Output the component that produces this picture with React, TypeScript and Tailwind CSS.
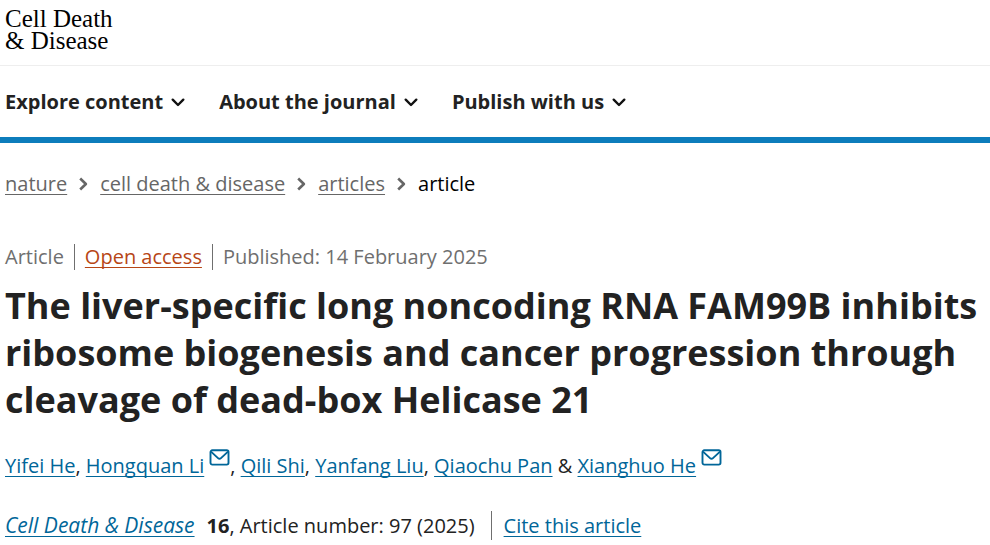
import { Fragment } from "react"

interface Author {
  name: string
  corresponding?: boolean
}

const menus = ["Explore content", "About the journal", "Publish with us"]

const crumbs = ["nature", "cell death & disease", "articles"]

const authors: Author[] = [
  { name: "Yifei He" },
  { name: "Hongquan Li", corresponding: true },
  { name: "Qili Shi" },
  { name: "Yanfang Liu" },
  { name: "Qiaochu Pan" },
  { name: "Xianghuo He", corresponding: true },
]

const linkClass = "underline decoration-1 underline-offset-3 [text-decoration-skip-ink:none]"

function ChevronDown() {
  return (
    <svg width="14" height="9" viewBox="0 0 14 9" fill="none" stroke="#111" strokeWidth="2.4" strokeLinecap="round" strokeLinejoin="round" aria-hidden="true">
      <path d="M1.7 1.7 7 7l5.3-5.3" />
    </svg>
  )
}

function ChevronRight() {
  return (
    <svg width="9" height="14" viewBox="0 0 9 14" fill="none" stroke="#666" strokeWidth="2.6" strokeLinejoin="round" aria-hidden="true">
      <path d="M1.2 1.5 6.9 7l-5.7 5.5" />
    </svg>
  )
}

function MailIcon() {
  return (
    <svg className="inline-block align-[7px] ml-[5px]" width="21" height="17" viewBox="0 0 21 17" fill="none" stroke="#069" strokeWidth="1.9" strokeLinejoin="round" aria-hidden="true">
      <rect x="1.5" y="1.3" width="18" height="14.3" rx="1.8" />
      <path d="m2 2.6 7 6.5c1 .9 2 .9 3 0l7-6.5" />
    </svg>
  )
}

export default function App() {
  return (
    <div className="bg-white text-[#222] text-[20px] leading-7 font-['Open_Sans','Noto_Sans',sans-serif]">
      <header className="border-b-6 border-[#0d7dbc]">
        <div className="px-[5px] pt-2 pb-[13px] border-b border-[#eee]">
          <a href="#" className="inline-block align-top text-[25px] leading-[22px] text-black font-['Liberation_Serif',serif]">
            Cell Death
            <br />
            &amp; Disease
          </a>
        </div>
        <nav className="flex items-center gap-[34px] px-[5px] pt-[22px] pb-[21px]">
          {menus.map((menu) => (
            <button key={menu} type="button" className="flex items-center gap-2 font-bold">
              {menu}
              <ChevronDown />
            </button>
          ))}
        </nav>
      </header>

      <nav aria-label="Breadcrumb" className="px-[5px] pt-[27px]">
        <ol className="flex items-center gap-3">
          {crumbs.map((crumb) => (
            <li key={crumb} className="flex items-center gap-3">
              <a href="#" className={`text-[#666] ${linkClass}`}>{crumb}</a>
              <ChevronRight />
            </li>
          ))}
          <li className="text-black">article</li>
        </ol>
      </nav>

      <main className="px-[5px] pt-[46px]">
        <ul className="flex items-center leading-[26px] text-[#6f6f6f]">
          <li className="pr-[10px] border-r border-[#6f6f6f]">Article</li>
          <li className="px-[10px] border-r border-[#6f6f6f]">
            <a href="#" className={`text-[#b74616] ${linkClass}`}>Open access</a>
          </li>
          <li className="pl-[10px]">
            Published: <time dateTime="2025-02-14">14 February 2025</time>
          </li>
        </ul>

        <h1 className="mt-3 text-[36px] leading-[47px] font-bold">
          The liver-specific long noncoding RNA FAM99B inhibits ribosome biogenesis and cancer progression through
          cleavage of dead-box Helicase 21
        </h1>

        <p className="mt-[26px]">
          {authors.map((author, i) => (
            <Fragment key={author.name}>
              {i > 0 && (i === authors.length - 1 ? " & " : ", ")}
              <a href="#" className={`text-[#069] ${linkClass}`}>{author.name}</a>
              {author.corresponding && <MailIcon />}
            </Fragment>
          ))}
        </p>

        <div className="mt-[31px] flex items-center">
          <p className="pr-4 border-r border-[#6f6f6f]">
            <a href="#" className={`mr-3 text-[21px] italic text-[#069] ${linkClass}`}>Cell Death &amp; Disease</a>
            <b>16</b>, Article number: 97 (2025)
          </p>
          <a href="#" className={`ml-3 text-[#069] ${linkClass}`}>Cite this article</a>
        </div>
      </main>
    </div>
  )
}
